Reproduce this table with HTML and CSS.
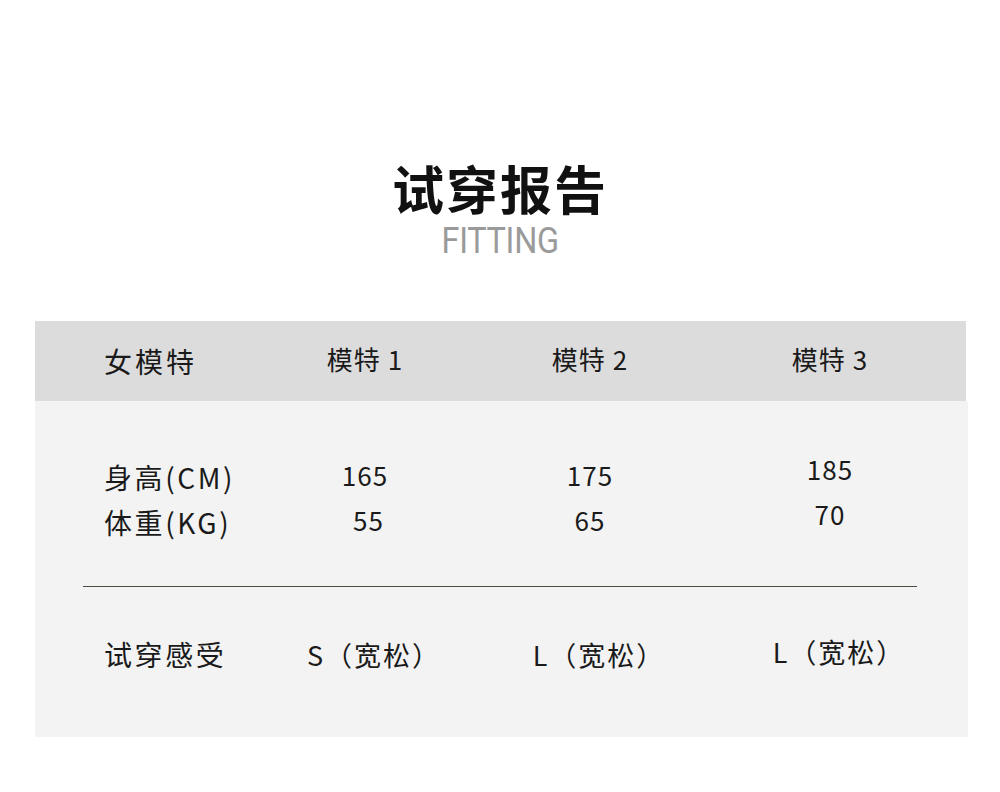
FILE: index.html
```html
<!DOCTYPE html>
<html lang="zh-CN">
<head>
<meta charset="utf-8">
<title>试穿报告</title>
<link rel="stylesheet" href="styles.css">
</head>
<body>
<div class="page">
  <header class="heading">
    <h1 class="title">试穿报告</h1>
    <div class="subtitle"><span class="subtitle-text">FITTING</span></div>
  </header>

  <section class="report">
    <div class="thead">
      <div class="label label-head">女模特</div>
      <div class="cell">模特 1</div>
      <div class="cell">模特 2</div>
      <div class="cell">模特 3</div>
    </div>

    <div class="tbody">
      <div class="measures">
        <div class="label stack label-stack">
          <div>身高(CM)</div>
          <div>体重(KG)</div>
        </div>
        <div class="cell stack">
          <div>165</div>
          <div>&nbsp;55</div>
        </div>
        <div class="cell stack">
          <div>175</div>
          <div>65</div>
        </div>
        <div class="cell stack stack-raised">
          <div>185</div>
          <div>70</div>
        </div>
      </div>

      <div class="divider"></div>

      <div class="feel">
        <div class="label">试穿感受</div>
        <div class="cell feel-cell">S（宽松）</div>
        <div class="cell feel-cell">L（宽松）</div>
        <div class="cell feel-cell cell-raised">L（宽松）</div>
      </div>
    </div>
  </section>
</div>
</body>
</html>
```

FILE: styles.css
```css
* {
  box-sizing: border-box;
}

html, body {
  margin: 0;
  padding: 0;
  background: #ffffff;
}

body {
  font-family: "Noto Sans CJK SC", "Noto Sans", sans-serif;
  color: #1a1a1a;
}

.page {
  width: 1000px;
  height: 792px;
  padding-top: 160px;
  overflow: hidden;
}

.heading {
  text-align: center;
}

.title {
  margin: 0;
  font-size: 52px;
  line-height: 56px;
  font-weight: 700;
  color: #111111;
  letter-spacing: 2px;
}

.subtitle {
  margin-top: 5px;
  height: 40px;
  font-family: "Roboto", "Liberation Sans", sans-serif;
  font-size: 36px;
  line-height: 40px;
  color: #9a9a9a;
}

.subtitle-text {
  display: inline-block;
  transform: scaleX(0.9);
  letter-spacing: -0.3px;
}

.report {
  margin-top: 60px;
  margin-left: 35px;
  width: 933px;
}

.thead,
.measures,
.feel {
  display: grid;
  grid-template-columns: 146px 230px 220px 260px;
  padding-left: 69px;
}

.thead {
  width: 931px;
  height: 80px;
  align-items: center;
  padding-bottom: 6px;
  background: #dcdcdc;
}

.label {
  font-size: 28px;
  letter-spacing: 2.6px;
  white-space: nowrap;
}

.label-head {
  padding-top: 6px;
  letter-spacing: 3px;
}

.cell {
  text-align: center;
  font-size: 26px;
  letter-spacing: 1px;
  white-space: nowrap;
}

.tbody {
  background: #f3f3f3;
  padding-top: 51px;
  padding-bottom: 60px;
}

.stack {
  line-height: 45px;
}

.label-stack {
  padding-top: 3px;
}

.stack-raised {
  margin-top: -6px;
}

.divider {
  height: 1px;
  margin: 41px 51px 0 48px;
  background: #4c4c3e;
}

.feel {
  margin-top: 45px;
  line-height: 45px;
}

.feel-cell {
  font-size: 27px;
  letter-spacing: 2px;
  padding-left: 18px;
}

.cell-raised {
  margin-top: -3px;
}
```
